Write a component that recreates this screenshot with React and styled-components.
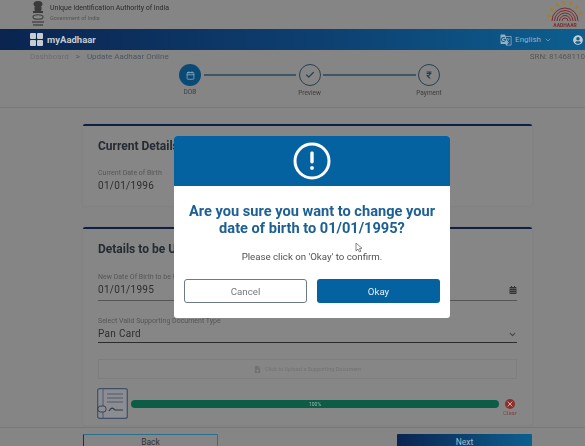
import React from "react";
import styled, { createGlobalStyle } from "styled-components";
import { FaRupeeSign, FaUserCircle, FaCalendarAlt, FaFileUpload } from "react-icons/fa";
import { FiCheck, FiCalendar, FiChevronDown, FiX } from "react-icons/fi";
import { MdGTranslate } from "react-icons/md";

const GlobalStyle = createGlobalStyle`
  html, body {
    margin: 0;
    height: 446px;
    overflow: hidden;
    background: #858585;
    font-family: Roboto, "Liberation Sans", sans-serif;
  }
`;

const Screen = styled.div`
  position: relative;
  width: 624px;
  height: 454px;
  overflow: hidden;
`;

const Page = styled.div`
  height: 100%;
  display: flex;
  flex-direction: column;
  filter: blur(0.6px);
`;

const TopBar = styled.header`
  height: 29px;
  flex: none;
  display: flex;
  align-items: center;
  padding: 0 41px 0 30px;
  gap: 4px;
`;

const OrgText = styled.div`
  flex: 1;
  display: flex;
  flex-direction: column;
  gap: 1px;
  margin-bottom: 3px;
`;

const OrgName = styled.div`
  font-size: 7px;
  line-height: 9px;
  color: #2b2b2b;
`;

const OrgSub = styled.div`
  font-size: 5.5px;
  line-height: 8px;
  color: #555;
`;

const NavBar = styled.nav`
  height: 21px;
  flex: none;
  display: flex;
  align-items: center;
  padding: 0 41px 0 30px;
  background: linear-gradient(90deg, #0b2450 0%, #0d3f70 50%, #0c6393 100%);
  color: #c3cbd2;
`;

const Brand = styled.div`
  flex: 1;
  display: flex;
  align-items: center;
  gap: 4px;
  font-size: 9.5px;
  font-weight: 700;
`;

const GridIcon = styled.div`
  display: grid;
  grid-template-columns: 6px 6px;
  grid-template-rows: 6px 6px;
  gap: 1px;
`;

const GridCell = styled.span`
  background: #c5ccd2;
  border-radius: 1px;
`;

const Lang = styled.div`
  display: flex;
  align-items: center;
  gap: 3px;
  font-size: 8px;
  margin-right: 21px;
  color: #8fb0c6;
`;

const Crumbs = styled.div`
  height: 14px;
  flex: none;
  display: flex;
  align-items: center;
  padding: 0 39px 0 30px;
  font-size: 8px;
  color: #6f6f6f;
  margin-top: -1px;
`;

const CrumbCurrent = styled.span`
  color: #4c5663;
  margin-left: 7px;
`;

const Srn = styled.span`
  margin-left: auto;
  color: #565656;
  white-space: nowrap;
`;

const Stepper = styled.div`
  height: 43px;
  flex: none;
  display: flex;
  justify-content: center;
  align-items: flex-start;
  padding-top: 1px;
  padding-right: 5px;
  border-bottom: 1px solid #777;
`;

const Step = styled.div`
  position: relative;
  width: 22px;
  height: 22px;
  flex: none;
  box-sizing: border-box;
  border-radius: 50%;
  display: flex;
  align-items: center;
  justify-content: center;
  color: ${(p) => (p.$active ? "#8fb0c6" : "#27404f")};
  background: ${(p) => (p.$active ? "#0c4a76" : "transparent")};
  border: ${(p) => (p.$active ? "none" : "1.5px solid #27404f")};
`;

const StepLabel = styled.span`
  position: absolute;
  top: 24px;
  left: 50%;
  transform: translateX(-50%);
  font-size: 6.5px;
  line-height: 9px;
  color: #3d3d3d;
`;

const Connector = styled.div`
  width: 92.5px;
  height: 2px;
  margin: 10px 2.5px 0;
  background: #3d5666;
`;

const Content = styled.main`
  flex: 1;
  padding: 16px 92px 0 83px;
  display: flex;
  flex-direction: column;
  gap: 21px;
`;

const Card = styled.section`
  height: ${(p) => p.$height}px;
  flex: none;
  box-sizing: border-box;
  padding: 13px 15px 0;
  border-top: 2px solid #101f45;
  background: #868686;
  box-shadow: 0 0 2px #7b7b7b;
  border-radius: 2px;
`;

const CardTitle = styled.h2`
  margin: 0 0 ${(p) => p.$gap}px;
  font-size: 12px;
  line-height: 14px;
  font-weight: 700;
  color: #252b33;
`;

const FieldLabel = styled.div`
  font-size: 7px;
  line-height: 9px;
  color: #565656;
`;

const FieldValue = styled.div`
  display: flex;
  justify-content: space-between;
  align-items: center;
  font-size: 10px;
  line-height: 14px;
  letter-spacing: 0.3px;
  color: #2e2e2e;
  margin-top: 1px;
  padding-bottom: ${(p) => p.$pad ?? 2}px;
  border-bottom: ${(p) => p.$line || "none"};
`;

const SelectField = styled.div`
  margin-top: 16px;
`;

const UploadBox = styled.div`
  height: 18px;
  margin-top: 16px;
  border: 1px solid #7e7e7e;
  display: flex;
  align-items: center;
  justify-content: center;
  gap: 4px;
  font-size: 5.5px;
  color: #727272;
`;

const UploadRow = styled.div`
  display: flex;
  align-items: center;
  margin: 9px -1px 0 -1px;
  gap: 3px;
`;

const ProgressBar = styled.div`
  flex: 1;
  height: 8px;
  margin-top: 1px;
  border-radius: 4px;
  background: #0c5c46;
  color: #9fb5ad;
  font-size: 5px;
  line-height: 8px;
  text-align: center;
`;

const ClearWrap = styled.div`
  width: 16px;
  display: flex;
  flex-direction: column;
  align-items: center;
  margin-top: 9px;
  font-size: 6px;
  line-height: 8px;
  color: #7d4a48;
`;

const ClearDot = styled.span`
  width: 10px;
  height: 10px;
  border-radius: 50%;
  background: #8e2f2b;
  color: #c9b3b1;
  display: flex;
  align-items: center;
  justify-content: center;
`;

const Footer = styled.footer`
  position: absolute;
  left: 0;
  right: 0;
  top: 427px;
  height: 27px;
  box-sizing: border-box;
  border-top: 1px solid #777;
  padding: 6px 92px 0 83px;
  display: flex;
  justify-content: space-between;
  background: #858585;
`;

const FooterButton = styled.div`
  width: 135px;
  height: 20px;
  box-sizing: border-box;
  border-radius: 1px;
  display: flex;
  justify-content: center;
  font-size: 8.5px;
  line-height: 8px;
  padding-top: ${(p) => (p.$primary ? 4 : 3)}px;
  color: ${(p) => (p.$primary ? "#a9bccb" : "#333")};
  background: ${(p) =>
    p.$primary ? "linear-gradient(90deg, #0b2450, #0c5f8e)" : "transparent"};
  border: ${(p) => (p.$primary ? "none" : "1px solid #1c2f45")};
  border-right-color: #2a7290;
  border-top-color: #2a6f8c;
`;

const Backdrop = styled.div`
  position: absolute;
  inset: 0;
  display: flex;
  align-items: center;
  justify-content: center;
`;

const Modal = styled.div`
  width: 276px;
  height: 182px;
  border-radius: 3px;
  background: #fff;
  overflow: hidden;
  display: flex;
  flex-direction: column;
  align-items: center;
  filter: blur(0.3px);
`;

const ModalHead = styled.div`
  align-self: stretch;
  height: 50px;
  flex: none;
  background: #0462a1;
  display: flex;
  align-items: center;
  justify-content: center;
`;

const ModalTitle = styled.h1`
  margin: 17px 0 0;
  width: 268px;
  text-align: center;
  font-size: 14.6px;
  line-height: 17px;
  font-weight: 700;
  color: #1d6093;
`;

const ModalText = styled.p`
  margin: 14px 0 0;
  font-size: 9.7px;
  line-height: 12px;
  color: #505050;
`;

const ModalActions = styled.div`
  display: flex;
  gap: 10px;
  margin-top: 16px;
`;

const ModalButton = styled.button`
  width: 123px;
  height: 24px;
  padding: 0;
  border-radius: 3px;
  box-sizing: border-box;
  font-family: inherit;
  font-size: 9.7px;
  font-weight: 400;
  color: ${(p) => (p.$primary ? "#e6eef4" : "#777")};
  background: ${(p) => (p.$primary ? "#0462a1" : "#fff")};
  border: ${(p) => (p.$primary ? "none" : "1.5px solid #6d7a85")};
`;

const Cursor = styled.svg`
  position: absolute;
  left: 355px;
  top: 242px;
`;

function Emblem() {
  return (
    <svg width="16" height="27" viewBox="0 0 16 27">
      <g fill="#3a3a3a">
        <ellipse cx="8" cy="3" rx="4.5" ry="3" />
        <rect x="4.5" y="5" width="7" height="5" rx="1.5" />
        <rect x="3" y="10" width="10" height="2" />
      </g>
      <path d="M3 16c0-3 10-3 10 0s-10 3-10 0z" fill="none" stroke="#444" strokeWidth="1.2" />
      <path d="M2 21h12M3 24h10" stroke="#4a4a4a" strokeWidth="1.6" />
    </svg>
  );
}

function AadhaarLogo() {
  const rays = [-80, -55, -30, -5, 20, 45, 70];
  return (
    <svg width="36" height="27" viewBox="0 0 36 27">
      {rays.map((a) => (
        <rect
          key={a}
          x="17"
          y="0"
          width="2.6"
          height="3.4"
          fill="#a5802c"
          transform={`rotate(${a} 18 18)`}
        />
      ))}
      <g fill="none" stroke="#7e2b2b" strokeWidth="1">
        <path d="M5 20a13 13 0 0 1 26 0" />
        <path d="M7.5 20a10.5 10.5 0 0 1 21 0" />
        <path d="M10 20a8 8 0 0 1 16 0" />
        <path d="M12.5 20a5.5 5.5 0 0 1 11 0" />
        <path d="M15 20a3 3 0 0 1 6 0" />
      </g>
      <text x="18" y="26" textAnchor="middle" fontSize="5" fontWeight="700" fill="#7e2b2b" fontFamily="Roboto, sans-serif">
        AADHAAR
      </text>
    </svg>
  );
}

function DocThumb() {
  return (
    <svg width="31" height="31" viewBox="0 0 31 31">
      <rect x="0.7" y="0.7" width="29.6" height="29.6" rx="2" fill="#8b8d92" stroke="#3f5066" strokeWidth="1.2" />
      <path d="M6 1v29M10 6h16M10 10h16M10 14h16" stroke="#4e5b6b" strokeWidth="1" fill="none" />
      <rect x="1" y="18" width="8" height="6" rx="2.5" fill="#8b8d92" stroke="#2e3a48" strokeWidth="0.9" />
      <path d="M12 23c2-4 4-3.5 6-1h8" stroke="#2e3a48" strokeWidth="1.2" fill="none" />
    </svg>
  );
}

export default function App() {
  return (
    <>
      <GlobalStyle />
      <Screen>
        <Page>
          <TopBar>
            <Emblem />
            <OrgText>
              <OrgName>Unique Identification Authority of India</OrgName>
              <OrgSub>Government of India</OrgSub>
            </OrgText>
            <AadhaarLogo />
          </TopBar>
          <NavBar>
            <Brand>
              <GridIcon>
                <GridCell />
                <GridCell />
                <GridCell />
                <GridCell />
              </GridIcon>
              myAadhaar
            </Brand>
            <Lang>
              <MdGTranslate size={12} />
              English
              <FiChevronDown size={8} />
            </Lang>
            <FaUserCircle size={10} color="#c3cbd2" />
          </NavBar>
          <Crumbs>
            Dashboard
            <CrumbCurrent>&gt;</CrumbCurrent>
            <CrumbCurrent>Update Aadhaar Online</CrumbCurrent>
            <Srn>SRN: 81468110</Srn>
          </Crumbs>
          <Stepper>
            <Step $active>
              <FiCalendar size={9} />
              <StepLabel>DOB</StepLabel>
            </Step>
            <Connector />
            <Step>
              <FiCheck size={10} strokeWidth={3} />
              <StepLabel>Preview</StepLabel>
            </Step>
            <Connector />
            <Step>
              <FaRupeeSign size={8} />
              <StepLabel>Payment</StepLabel>
            </Step>
          </Stepper>
          <Content>
            <Card $height={82}>
              <CardTitle $gap={16}>Current Details</CardTitle>
              <FieldLabel>Current Date of Birth</FieldLabel>
              <FieldValue>01/01/1996</FieldValue>
            </Card>
            <Card $height={198}>
              <CardTitle $gap={17}>Details to be Updated</CardTitle>
              <FieldLabel>New Date Of Birth to be Updated</FieldLabel>
              <FieldValue $line="1px solid #555" $pad={3}>
                01/01/1995
                <FaCalendarAlt size={8} color="#333" />
              </FieldValue>
              <SelectField>
                <FieldLabel>Select Valid Supporting Document Type</FieldLabel>
                <FieldValue $line="1px solid #2c2c2c" $pad={1}>
                  Pan Card
                  <FiChevronDown size={9} strokeWidth={3} color="#444" />
                </FieldValue>
              </SelectField>
              <UploadBox>
                <FaFileUpload size={7} />
                Click to Upload a Supporting Document
              </UploadBox>
              <UploadRow>
                <DocThumb />
                <ProgressBar>100%</ProgressBar>
                <ClearWrap>
                  <ClearDot>
                    <FiX size={8} strokeWidth={3} />
                  </ClearDot>
                  Clear
                </ClearWrap>
              </UploadRow>
            </Card>
          </Content>
          <Footer>
            <FooterButton>Back</FooterButton>
            <FooterButton $primary>Next</FooterButton>
          </Footer>
        </Page>
        <Backdrop>
          <Modal>
            <ModalHead>
              <svg width="38" height="38" viewBox="0 0 38 38">
                <circle cx="19" cy="19" r="17" fill="none" stroke="#fff" strokeWidth="3" />
                <rect x="17.3" y="9.5" width="3.4" height="12" rx="1.4" fill="#fff" />
                <rect x="17.3" y="24.2" width="3.4" height="3.6" rx="1" fill="#fff" />
              </svg>
            </ModalHead>
            <ModalTitle>Are you sure you want to change your date of birth to 01/01/1995?</ModalTitle>
            <ModalText>Please click on 'Okay' to confirm.</ModalText>
            <ModalActions>
              <ModalButton>Cancel</ModalButton>
              <ModalButton $primary>Okay</ModalButton>
            </ModalActions>
          </Modal>
        </Backdrop>
        <Cursor width="8" height="11" viewBox="0 0 8 11">
          <path d="M1 1l0 8 2-2 1.5 3 1.4-.7L4.5 6.5 7 6.3z" fill="#fff" stroke="#555" strokeWidth="0.7" />
        </Cursor>
      </Screen>
    </>
  );
}
